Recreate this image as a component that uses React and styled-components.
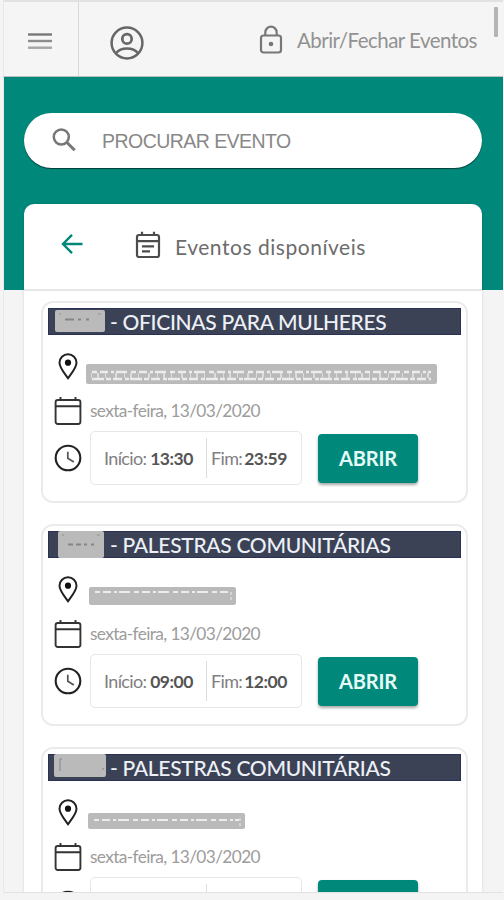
import React from "react";
import styled, { createGlobalStyle } from "styled-components";

const events = [
  {
    title: "OFICINAS PARA MULHERES",
    code: { left: 7, top: 2, width: 50, height: 22, dash: "9 4 3 5 3 5", dashY: 9 },
    place: { left: 0, top: 13, width: 351, height: 20, lines: [8, 15] },
    date: "sexta-feira, 13/03/2020",
    start: "13:30",
    end: "23:59",
  },
  {
    title: "PALESTRAS COMUNITÁRIAS",
    code: { left: 10, top: 0, width: 46, height: 27, dash: "5 3 5 3 3 4", dashY: 13 },
    place: { left: 3, top: 13, width: 147, height: 18, lines: [5] },
    date: "sexta-feira, 13/03/2020",
    start: "09:00",
    end: "12:00",
  },
  {
    title: "PALESTRAS COMUNITÁRIAS",
    code: { left: 6, top: 0, width: 52, height: 23 },
    place: { left: 2, top: 16, width: 157, height: 16, lines: [7] },
    date: "sexta-feira, 13/03/2020",
    start: "09:00",
    end: "12:00",
  },
];

const MenuIcon = () => (
  <svg width="26" height="20" viewBox="0 0 26 20" fill="none" strokeWidth="2.4">
    <path d="M1 3.5h24" stroke="#777" />
    <path d="M1 10h24" stroke="#8c8c8c" />
    <path d="M1 16.7h24" stroke="#a5a5a5" />
  </svg>
);

const UserIcon = () => (
  <svg width="34" height="34" viewBox="0 0 34 34" fill="none" stroke="#666" strokeWidth="2.5">
    <circle cx="17" cy="17" r="15.4" />
    <circle cx="17" cy="12.9" r="4.7" strokeWidth="2.7" />
    <path d="M6.4 26.8c2.2-3 6.4-4.3 10.6-4.3s8.4 1.3 10.6 4.3" />
  </svg>
);

const LockIcon = () => (
  <svg width="24" height="30" viewBox="0 0 24 30" fill="none" stroke="#777" strokeWidth="2.2">
    <rect x="2" y="10.5" width="20" height="17" rx="2.5" />
    <path d="M6.3 10.5V7.400a5.700 5.700 0 0 1 11.400 0v3.100" />
    <circle cx="12" cy="19" r="2.300" fill="#777" stroke="none" />
  </svg>
);

const SearchIcon = () => (
  <svg width="24" height="24" viewBox="0 0 24 24" fill="none" stroke="#777" strokeWidth="2.5">
    <circle cx="9.3" cy="9" r="7.5" />
    <path d="M14.7 14.3l8 8" strokeWidth="3" />
  </svg>
);

const BackIcon = () => (
  <svg width="22" height="20" viewBox="0 0 22 20" fill="none" stroke="#00897b" strokeWidth="2.4">
    <path d="M21.5 10H2M11 .8L2 10l9 9.2" />
  </svg>
);

const NoteIcon = () => (
  <svg width="26" height="28" viewBox="0 0 26 28" fill="none" stroke="#4c4c4c" strokeWidth="2.2">
    <rect x="2" y="4" width="22" height="22" rx="2" />
    <path d="M2 10.2h22M7 .8v3M19 .8v3" />
    <path d="M7 15.3h12M7 20.3h8" />
  </svg>
);

const PinIcon = () => (
  <svg width="20" height="27" viewBox="0 0 20 27" fill="none" stroke="#222" strokeWidth="2">
    <path d="M10 25.2C6.8 20.600 1.500 14.700 1.500 9.700a8.500 8.500 0 0 1 17 0c0 5-5.300 10.900-8.500 15.500z" />
    <circle cx="10" cy="9.700" r="3.100" fill="#111" stroke="none" />
  </svg>
);

const CalendarIcon = () => (
  <svg width="28" height="30" viewBox="0 0 28 30" fill="none" stroke="#333" strokeWidth="1.9">
    <rect x="1.6" y="4" width="24.8" height="24" rx="2.2" />
    <path d="M1.6 10.3h24.8M6.5 1v3M21.5 1v3" />
  </svg>
);

const ClockIcon = () => (
  <svg width="28" height="28" viewBox="0 0 28 28" fill="none" stroke="#222" strokeWidth="2.1">
    <circle cx="14" cy="14" r="12.3" />
    <path d="M13.8 7.8v6.4l6 3.8" stroke="#555" strokeWidth="1.7" />
  </svg>
);

const CodeMask = ({ mask }) => (
  <Mask $mask={mask}>
    <svg width={mask.width} height={mask.height} fill="none">
      {mask.dash ? (
        <>
          <path
            d={`M10 ${mask.dashY + 0.5}H36`}
            stroke="#858585"
            strokeWidth="2"
            strokeDasharray={mask.dash}
          />
          <path d={`M4 4h2M${mask.width - 7} 4h3`} stroke="#929292" />
        </>
      ) : (
        <path d="M8 5H6v12M48 15h2" stroke="#858585" />
      )}
    </svg>
  </Mask>
);

const PlaceMask = ({ mask }) => (
  <Mask $mask={mask}>
    <svg width={mask.width} height={mask.height} fill="none">
      {mask.lines.map((y, i) => (
        <path
          key={y}
          d={`M6 ${y}H${mask.width - 6}`}
          stroke="#ececec"
          strokeWidth={mask.lines.length > 1 ? 2.3 : 1.8}
          strokeDasharray={i ? "12 2 5 2 9 3 4 1" : "5 3 8 3 3 2 11 4"}
        />
      ))}
      {mask.lines.length > 1 && (
        <path
          d={`M5 11.5H${mask.width - 6}`}
          stroke="#dcdcdc"
          strokeWidth="5"
          strokeDasharray="1 5 2 6 1 9 2 7"
        />
      )}
      {mask.lines.length === 1 && (
        <path d={`M${mask.width - 5} 5v9`} stroke="#eee" strokeDasharray="3 2" />
      )}
    </svg>
  </Mask>
);

const EventCard = ({ event }) => (
  <Card>
    <CardTitle>
      <CodeSlot>
        <CodeMask mask={event.code} />
      </CodeSlot>
      <TitleText>- {event.title}</TitleText>
    </CardTitle>
    <PlaceRow>
      <IconCell>
        <PinIcon />
      </IconCell>
      <PlaceMask mask={event.place} />
    </PlaceRow>
    <DateRow>
      <IconCell>
        <CalendarIcon />
      </IconCell>
      <DateText>{event.date}</DateText>
    </DateRow>
    <TimeRow>
      <IconCell>
        <ClockIcon />
      </IconCell>
      <TimeBox>
        <StartTime>
          <TimeLabel>Início:</TimeLabel>
          <Time>{event.start}</Time>
        </StartTime>
        <EndTime>
          <TimeLabel>Fim:</TimeLabel>
          <Time>{event.end}</Time>
        </EndTime>
      </TimeBox>
      <OpenButton>ABRIR</OpenButton>
    </TimeRow>
  </Card>
);

const App = () => {
  return (
    <Page>
      <GlobalStyle />
      <TopBar>
        <MenuButton>
          <MenuIcon />
        </MenuButton>
        <UserButton>
          <UserIcon />
        </UserButton>
        <LockLink>
          <LockIcon />
          <LockText>Abrir/Fechar Eventos</LockText>
        </LockLink>
        <ScrollThumb />
      </TopBar>
      <Main>
        <SearchBox>
          <SearchIcon />
          <SearchInput placeholder="PROCURAR EVENTO" />
        </SearchBox>
        <Panel>
          <PanelHeader>
            <BackIcon />
            <PanelTitle>
              <NoteIcon />
              <PanelTitleText>Eventos disponíveis</PanelTitleText>
            </PanelTitle>
          </PanelHeader>
          <EventList>
            {events.map((event, i) => (
              <EventCard key={i} event={event} />
            ))}
          </EventList>
        </Panel>
      </Main>
    </Page>
  );
};

const GlobalStyle = createGlobalStyle`
  * {
    box-sizing: border-box;
  }
  body {
    margin: 0;
    overflow: hidden;
    background: #f4f4f4;
    font-family: Lato, "Open Sans", sans-serif;
  }
  svg {
    display: block;
    flex-shrink: 0;
  }
`;

const Page = styled.div`
  height: 900px;
  padding: 0 1px 7px 3px;
  overflow: hidden;
  background: #f4f4f4;
`;

const TopBar = styled.header`
  display: flex;
  height: 77px;
  border-top: 2px solid #e2e2e2;
  border-left: 1px solid #e8e8e8;
  border-bottom: 1px solid #b9bfbd;
  background: #f5f5f5;
`;

const MenuButton = styled.div`
  width: 75px;
  padding: 29px 0 0 23px;
  border-right: 1px solid #d9d9d9;
`;

const UserButton = styled.div`
  padding: 24px 0 0 31px;
`;

const LockLink = styled.div`
  display: flex;
  padding: 23px 0 0;
  margin-left: 115px;
  gap: 14px;
`;

const LockText = styled.span`
  width: 197px;
  font-size: 20.5px;
  line-height: 30px;
  letter-spacing: -0.52px;
  white-space: nowrap;
  color: #929292;
`;

const ScrollThumb = styled.div`
  width: 4px;
  height: 30px;
  margin-top: 5px;
  border-radius: 1px;
  background: #b4b4b4;
`;

const Main = styled.main`
  height: 816px;
  padding: 36px 21px 0 20px;
  border-left: 1px solid #e9e9e9;
  border-bottom: 1px solid #e2e2e2;
  overflow: hidden;
  background: linear-gradient(#00897b 213px, #f4f4f4 213px);
`;

const SearchBox = styled.div`
  display: flex;
  height: 55px;
  padding: 15px 28px 0;
  border-radius: 28px;
  background: #fff;
  box-shadow: 0 1px 1px rgba(0, 35, 30, 0.75);
`;

const SearchInput = styled.input`
  width: 300px;
  height: 26px;
  margin-left: 26px;
  padding: 0;
  border: 0;
  outline: 0;
  background: none;
  font-family: "Liberation Sans", Arial, sans-serif;
  font-size: 19.5px;
  letter-spacing: -0.54px;

  &::placeholder {
    color: #888;
    opacity: 1;
  }
`;

const Panel = styled.section`
  height: 730px;
  margin-top: 36px;
  border-radius: 10px 10px 0 0;
  background: #fff;
  box-shadow: 0 0 3px rgba(0, 0, 0, 0.12);
`;

const PanelHeader = styled.div`
  display: flex;
  height: 87px;
  padding: 30px 0 0 37px;
  border-bottom: 2px solid #e6e8e8;
`;

const PanelTitle = styled.div`
  display: flex;
  margin: -3px 0 0 52px;
  gap: 14px;
`;

const PanelTitleText = styled.span`
  padding-top: 1px;
  font-size: 21px;
  line-height: 30px;
  letter-spacing: 0.53px;
  color: #6c6c6c;
`;

const EventList = styled.div`
  display: flex;
  flex-direction: column;
  gap: 21px;
  padding: 10px 14px 0 17px;
`;

const Card = styled.article`
  height: 202px;
  flex-shrink: 0;
  padding: 5px;
  border: 2px solid #ebebeb;
  border-radius: 12px;
`;

const CardTitle = styled.h2`
  display: flex;
  align-items: flex-start;
  height: 27px;
  margin: 0;
  background: #3b4256;
  box-shadow: inset 0 0 0 1px #2a3155;
`;

const CodeSlot = styled.span`
  width: 62px;
`;

const Mask = styled.span`
  display: block;
  width: ${({ $mask }) => $mask.width}px;
  height: ${({ $mask }) => $mask.height}px;
  margin: ${({ $mask }) => `${$mask.top}px 0 0 ${$mask.left}px`};
  border-radius: 2px;
  background: #bababa;
`;

const TitleText = styled.span`
  font-size: 21px;
  font-weight: 500;
  line-height: 27px;
  letter-spacing: -0.31px;
  white-space: nowrap;
  color: #edf0f7;
`;

const IconCell = styled.span`
  display: flex;
  justify-content: center;
  width: 28px;
  margin-left: 6px;
`;

const PlaceRow = styled.div`
  display: flex;
  height: 44px;
  margin-top: 16px;

  ${IconCell} {
    padding-top: 2px;
    margin-right: 4px;
  }
`;

const DateRow = styled.div`
  display: flex;
  align-items: flex-start;
  height: 36px;
  padding-top: 1px;
`;

const DateText = styled.span`
  margin-left: 8px;
  font-size: 17.3px;
  line-height: 30px;
  letter-spacing: -0.62px;
  white-space: nowrap;
  color: #9c9c9c;
`;

const TimeRow = styled.div`
  display: flex;
  align-items: center;
  height: 54px;
`;

const TimeBox = styled.div`
  display: flex;
  align-items: center;
  width: 212px;
  height: 54px;
  margin-left: 8px;
  border: 1.5px solid #e6e6e6;
  border-radius: 5px;
  font-size: 18px;
  white-space: nowrap;
`;

const StartTime = styled.div`
  display: flex;
  align-items: center;
  justify-content: space-between;
  width: 116px;
  height: 40px;
  padding: 0 13px 0 13px;
  border-right: 1px solid #ddd;
`;

const EndTime = styled.div`
  display: flex;
  align-items: center;
  justify-content: space-between;
  width: 80px;
  padding-left: 4px;
`;

const TimeLabel = styled.span`
  letter-spacing: -0.65px;
  color: #808080;
`;

const Time = styled.span`
  font-size: 17.5px;
  font-weight: 700;
  letter-spacing: -0.45px;
  color: #555;
`;

const OpenButton = styled.button`
  width: 100px;
  height: 49px;
  margin-left: 16px;
  padding: 0;
  border: 0;
  border-radius: 4px;
  background: #00897b;
  box-shadow: 0 2px 3px rgba(0, 0, 0, 0.35);
  font-family: inherit;
  font-size: 20px;
  font-weight: 700;
  letter-spacing: -0.1px;
  color: #e6fbf8;
`;

export default App;
